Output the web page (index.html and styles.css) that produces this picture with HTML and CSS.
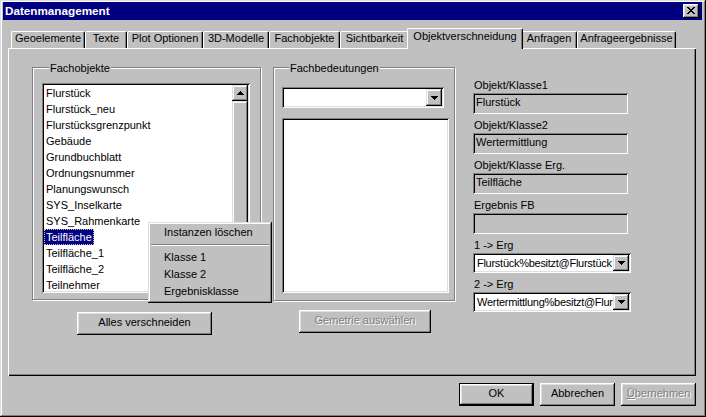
FILE: index.html
```html
<!DOCTYPE html>
<html lang="de">
<head>
<meta charset="utf-8">
<title>Datenmanagement</title>
<link rel="stylesheet" href="styles.css">
</head>
<body>
<div class="window">
  <div class="titlebar">
    <span class="title">Datenmanagement</span>
    <span class="close"><svg width="8" height="7" viewBox="0 0 8 7" shape-rendering="crispEdges"><path fill="#000" d="M0 0h2v1H0zM6 0h2v1H6zM1 1h2v1H1zM5 1h2v1H5zM2 2h4v1H2zM3 3h2v1H3zM2 4h4v1H2zM1 5h2v1H1zM5 5h2v1H5zM0 6h2v1H0zM6 6h2v1H6z"/></svg></span>
  </div>
  <div class="client">
    <div class="tabs">
      <div class="tab">Geoelemente</div>
      <div class="tab">Texte</div>
      <div class="tab">Plot Optionen</div>
      <div class="tab">3D-Modelle</div>
      <div class="tab">Fachobjekte</div>
      <div class="tab">Sichtbarkeit</div>
      <div class="tab active">Objektverschneidung</div>
      <div class="tab">Anfragen</div>
      <div class="tab">Anfrageergebnisse</div>
    </div>
    <div class="panel">
      <div class="col col-objects">
        <div class="group group-objects">
          <div class="group-label">Fachobjekte</div>
          <div class="listbox list-objects">
            <div class="list-items">
              <div class="item">Flurstück</div>
              <div class="item">Flurstück_neu</div>
              <div class="item">Flurstücksgrenzpunkt</div>
              <div class="item">Gebäude</div>
              <div class="item">Grundbuchblatt</div>
              <div class="item">Ordnungsnummer</div>
              <div class="item">Planungswunsch</div>
              <div class="item">SYS_Inselkarte</div>
              <div class="item">SYS_Rahmenkarte</div>
              <div class="item"><span class="sel">Teilfläche</span></div>
              <div class="item">Teilfläche_1</div>
              <div class="item">Teilfläche_2</div>
              <div class="item">Teilnehmer</div>
            </div>
            <div class="scrollbar">
              <div class="sb-btn"><svg width="7" height="4" viewBox="0 0 7 4" shape-rendering="crispEdges"><path fill="#000" d="M3 0h1v1H3zM2 1h3v1H2zM1 2h5v1H1zM0 3h7v1H0z"/></svg></div>
              <div class="sb-thumb"></div>
              <div class="sb-track"></div>
              <div class="sb-btn"><svg width="7" height="4" viewBox="0 0 7 4" shape-rendering="crispEdges"><path fill="#000" d="M0 0h7v1H0zM1 1h5v1H1zM2 2h3v1H2zM3 3h1v1H3z"/></svg></div>
            </div>
          </div>
        </div>
        <div class="btn btn-cut">Alles verschneiden</div>
      </div>
      <div class="col col-meanings">
        <div class="group group-meanings">
          <div class="group-label">Fachbedeutungen</div>
          <div class="combo combo-meaning">
            <span class="combo-text"></span>
            <span class="combo-btn"><svg width="7" height="4" viewBox="0 0 7 4" shape-rendering="crispEdges"><path fill="#000" d="M0 0h7v1H0zM1 1h5v1H1zM2 2h3v1H2zM3 3h1v1H3z"/></svg></span>
          </div>
          <div class="listbox list-meanings"></div>
        </div>
        <div class="btn btn-geom disabled">Gemetrie auswählen</div>
      </div>
      <div class="col col-fields">
        <div class="field-label">Objekt/Klasse1</div>
        <div class="field">Flurstück</div>
        <div class="field-label">Objekt/Klasse2</div>
        <div class="field">Wertermittlung</div>
        <div class="field-label">Objekt/Klasse Erg.</div>
        <div class="field">Teilfläche</div>
        <div class="field-label">Ergebnis FB</div>
        <div class="field"></div>
        <div class="field-label">1 -&gt; Erg</div>
        <div class="combo combo-small">
          <span class="combo-text">Flurstück%besitzt@Flurstück</span>
          <span class="combo-btn"><svg width="7" height="4" viewBox="0 0 7 4" shape-rendering="crispEdges"><path fill="#000" d="M0 0h7v1H0zM1 1h5v1H1zM2 2h3v1H2zM3 3h1v1H3z"/></svg></span>
        </div>
        <div class="field-label">2 -&gt; Erg</div>
        <div class="combo combo-small">
          <span class="combo-text">Wertermittlung%besitzt@Flur</span>
          <span class="combo-btn"><svg width="7" height="4" viewBox="0 0 7 4" shape-rendering="crispEdges"><path fill="#000" d="M0 0h7v1H0zM1 1h5v1H1zM2 2h3v1H2zM3 3h1v1H3z"/></svg></span>
        </div>
      </div>
    </div>
    <div class="footer">
      <div class="btn btn-default">OK</div>
      <div class="btn">Abbrechen</div>
      <div class="btn disabled"><u>Ü</u>bernehmen</div>
    </div>
  </div>
  <div class="context-menu">
    <div class="menu-item">Instanzen löschen</div>
    <div class="menu-sep"></div>
    <div class="menu-item">Klasse 1</div>
    <div class="menu-item">Klasse 2</div>
    <div class="menu-item">Ergebnisklasse</div>
  </div>
</div>
</body>
</html>
```
FILE: styles.css
```css
* { box-sizing: border-box; }
html, body { margin: 0; padding: 0; }
body {
  width: 706px;
  height: 417px;
  overflow: hidden;
  background: #c0c0c0;
  font-family: "Liberation Sans", Arial, sans-serif;
  font-size: 11px;
  line-height: 13px;
  color: #000;
}

.window {
  position: relative;
  width: 706px;
  height: 417px;
  display: flex;
  flex-direction: column;
  padding: 2px 3px 3px 3px;
  background: #c0c0c0;
  box-shadow: inset -1px -1px #000, inset 1px 1px #dfdfdf, inset -2px -2px #808080, inset 2px 2px #fff;
}

/* title bar */
.titlebar {
  flex: none;
  height: 18px;
  margin-right: 1px;
  display: flex;
  align-items: flex-start;
  padding: 2px 3px 0 2px;
  background: #000080;
}
.title {
  font-weight: bold;
  font-size: 11.7px;
  line-height: 14px;
  color: #fff;
  white-space: nowrap;
}
.close {
  margin-left: auto;
  width: 16px;
  height: 14px;
  padding: 3px 0 0 4px;
  background: #c0c0c0;
  box-shadow: inset -1px -1px #000, inset 1px 1px #fff, inset -2px -2px #808080, inset 2px 2px #dfdfdf;
}
.close svg { display: block; }

/* client */
.client {
  flex: 1;
  display: flex;
  flex-direction: column;
  padding: 8px 7px 0 5px;
}

/* tabs */
.tabs {
  flex: none;
  height: 20px;
  margin-left: 3px;
  display: grid;
  grid-template-columns: 74px 42px 76px 66px 71px 69px 112px 56px 99px;
  align-items: end;
}
.tab {
  height: 17px;
  text-align: center;
  white-space: nowrap;
  background: #c0c0c0;
  border-top: 1px solid #fff;
  border-left: 1px solid #fff;
  border-right: 1px solid #000;
  border-radius: 2px 2px 0 0;
  box-shadow: inset -1px 0 #808080;
}
.tab.active {
  position: relative;
  z-index: 1;
  height: 21px;
  margin: 0 -2px -1px;
  padding-top: 1px;
}

/* panel */
.panel {
  flex: none;
  height: 328px;
  display: flex;
  align-items: flex-start;
  padding: 14px 0 0 24px;
  box-shadow: inset 1px 1px #fff, inset -1px -1px #000, inset -2px -2px #808080;
}

.group {
  margin-top: 5px;
  border: 1px solid #808080;
  box-shadow: 1px 1px #fff, inset 1px 1px #fff;
}
.group-label {
  width: max-content;
  height: 13px;
  margin: -6px 0 0 7px;
  padding: 0 1px;
  background: #c0c0c0;
  white-space: nowrap;
}

.col-objects { width: 229px; margin-right: 12px; }
.group-objects { padding: 0 9px 6px 9px; }

.listbox {
  display: flex;
  padding: 2px;
  background: #fff;
  box-shadow: inset 1px 1px #808080, inset -1px -1px #fff, inset 2px 2px #000, inset -2px -2px #dfdfdf;
}
.list-objects { width: 208px; height: 210px; margin-top: 8px; }
.list-items { flex: 1; min-width: 0; overflow: hidden; }
.item {
  height: 16px;
  line-height: 16px;
  padding-left: 2px;
  white-space: nowrap;
}
.item .sel {
  display: inline-block;
  margin-left: -2px;
  padding: 0 2px;
  background: #000080;
  color: #fff;
  outline: 1px dotted #c0c0c0;
  outline-offset: -1px;
}

.scrollbar {
  flex: none;
  width: 16px;
  display: flex;
  flex-direction: column;
}
.sb-btn, .sb-thumb {
  flex: none;
  background: #c0c0c0;
  box-shadow: inset -1px -1px #000, inset 1px 1px #dfdfdf, inset -2px -2px #808080, inset 2px 2px #fff;
}
.sb-btn {
  height: 16px;
  display: flex;
  align-items: center;
  justify-content: center;
}
.sb-btn svg { display: block; }
.sb-thumb { height: 150px; }
.sb-track {
  flex: 1;
  background: repeating-conic-gradient(#fff 0 25%, #c0c0c0 0 50%) 0 0 / 2px 2px;
}

.btn {
  height: 23px;
  line-height: 21px;
  text-align: center;
  white-space: nowrap;
  background: #c0c0c0;
  box-shadow: inset -1px -1px #000, inset 1px 1px #fff, inset -2px -2px #808080, inset 2px 2px #dfdfdf;
}
.btn-cut { width: 135px; margin: 12px 0 0 45px; }
.disabled { color: #808080; text-shadow: 1px 1px 0 #fff; }

.col-meanings { width: 182px; margin-right: 18px; }
.group-meanings { padding: 0 6px 7px 8px; }

.combo {
  display: flex;
  padding: 2px;
  background: #fff;
  box-shadow: inset 1px 1px #808080, inset -1px -1px #fff, inset 2px 2px #000, inset -2px -2px #dfdfdf;
}
.combo-meaning { width: 162px; height: 21px; margin-top: 12px; }
.combo-text {
  flex: 1;
  min-width: 0;
  overflow: hidden;
  white-space: nowrap;
  padding-left: 2px;
  line-height: 16px;
  letter-spacing: -0.27px;
}
.combo-btn {
  flex: none;
  width: 16px;
  display: flex;
  align-items: center;
  justify-content: center;
  background: #c0c0c0;
  box-shadow: inset -1px -1px #000, inset 1px 1px #dfdfdf, inset -2px -2px #808080, inset 2px 2px #fff;
}
.combo-btn svg { display: block; }
.list-meanings { width: 167px; height: 175px; margin-top: 10px; }
.btn-geom { width: 132px; margin: 9px 0 0 26px; }

.col-fields { width: 160px; margin-top: 17px; }
.field-label {
  height: 13px;
  padding-left: 1px;
  white-space: nowrap;
}
.field {
  width: 155px;
  height: 21px;
  margin: 1px 0 5px;
  padding-left: 3px;
  line-height: 19px;
  white-space: nowrap;
  overflow: hidden;
  box-shadow: inset 1px 1px #808080, inset -1px -1px #fff, inset 2px 2px #000, inset -2px -2px #c0c0c0;
}
.combo-small { width: 158px; height: 20px; margin: 1px 0 5px; }

/* footer buttons */
.footer {
  flex: none;
  display: flex;
  justify-content: flex-end;
  gap: 6px;
  margin-top: 7px;
}
.footer .btn { width: 75px; }
.btn-default {
  border: 1px solid #000;
  line-height: 19px;
}

/* context menu */
.context-menu {
  position: absolute;
  left: 148px;
  top: 222px;
  z-index: 5;
  width: 124px;
  height: 81px;
  padding: 2px;
  background: #c0c0c0;
  box-shadow: inset -1px -1px #000, inset 1px 1px #dfdfdf, inset -2px -2px #808080, inset 2px 2px #fff;
}
.menu-item {
  height: 17px;
  line-height: 17px;
  padding-left: 14px;
  white-space: nowrap;
}
.menu-sep {
  height: 8px;
  margin: 0 1px;
  padding-top: 3px;
}
.menu-sep::before {
  content: "";
  display: block;
  border-top: 1px solid #808080;
  border-bottom: 1px solid #fff;
}
```
